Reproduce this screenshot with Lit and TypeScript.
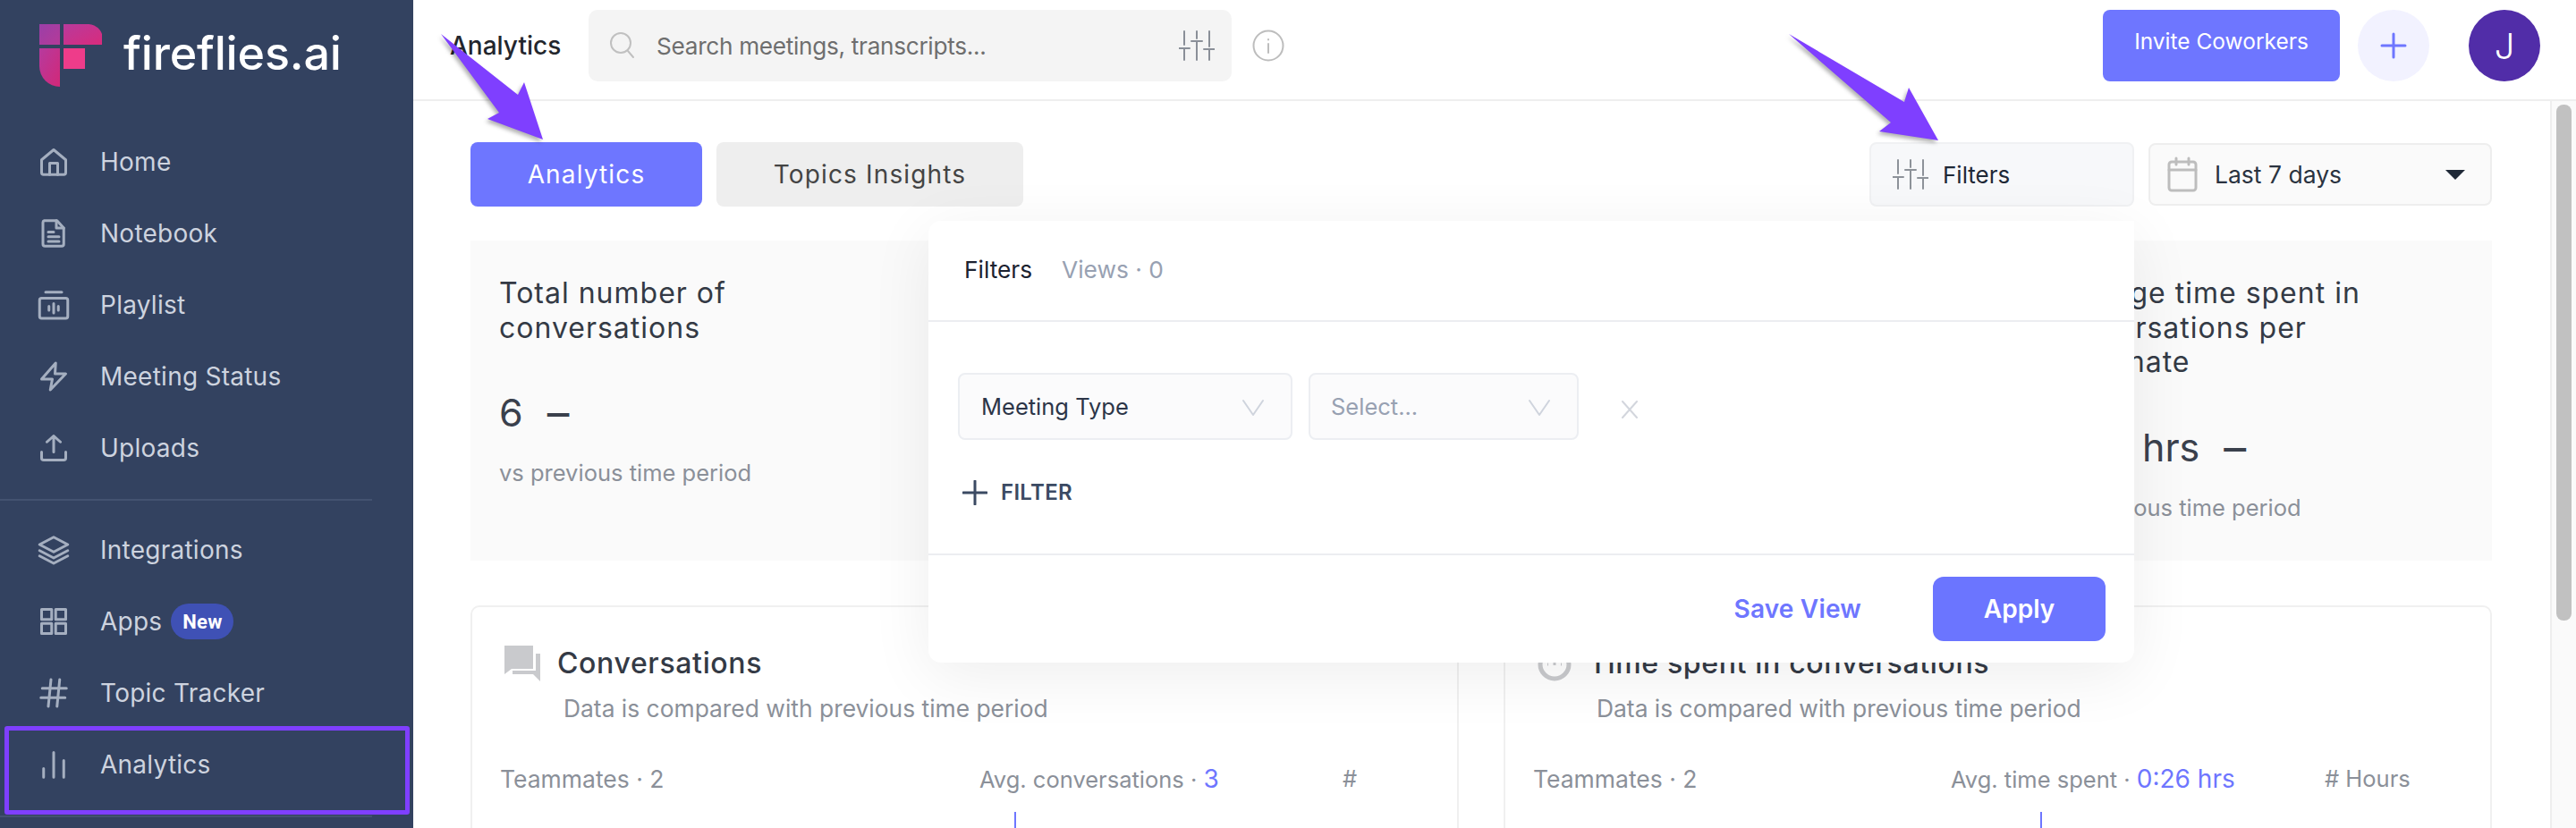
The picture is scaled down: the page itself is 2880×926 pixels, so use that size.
import { LitElement, html, css, svg } from "lit";
import { customElement } from "lit/decorators.js";

const ic = (w: number, h: number, vb: string, body: unknown, cls = "") =>
  html`<svg class=${cls} width=${w} height=${h} viewBox=${vb} fill="none" stroke="currentColor" stroke-width="2" stroke-linecap="round" stroke-linejoin="round">${body}</svg>`;

const sliders = (w: number, h: number) =>
  ic(w, h, "0 0 40 34", svg`<path d="M6 1v15M0 20h12M6 20v13M20 1v8M14 12h12M20 12v21M34 1v17M28 21h12M34 21v12"/>`);

const navTop = [
  ["Home", svg`<path d="M3 10.5 12 3l9 7.5V20a1.5 1.5 0 0 1-1.5 1.5h-15A1.5 1.5 0 0 1 3 20z"/><path d="M9 21.5V13h6v8.5"/>`],
  ["Notebook", svg`<path d="M5 2.500h9.500l5 5.500V20a1.500 1.500 0 0 1-1.500 1.500H5.500A1.500 1.500 0 0 1 4 20V4a1.500 1.500 0 0 1 1-1.500z"/><path d="M14 2.500V8h5.500M8 11h4M8 14.500h8M8 18h8"/>`],
  ["Playlist", svg`<path d="M6 2.500h12"/><rect x="1.500" y="7" width="21" height="15" rx="1.500"/><path d="M12 11v7M8.500 13v3M15.500 13v3"/>`],
  ["Meeting Status", svg`<path d="M13.500 2 3 14h8l-1.500 8L21 10h-8z"/>`],
  ["Uploads", svg`<path d="M3 15v4.500A1.500 1.500 0 0 0 4.500 21h15a1.500 1.500 0 0 0 1.500-1.500V15M12 15V3M7 7.500 12 3l5 4.500"/>`],
];
const navBottom = [
  ["Integrations", svg`<path d="M12 2.500 22.500 8 12 13.500 1.500 8z"/><path d="M1.500 12.500 12 18l10.500-5.500M1.500 16.500 12 22l10.500-5.500"/>`],
  ["Apps", svg`<rect x="3" y="3" width="7.500" height="7.500"/><rect x="13.500" y="3" width="7.500" height="7.500"/><rect x="3" y="13.500" width="7.500" height="7.500"/><rect x="13.500" y="13.500" width="7.500" height="7.500"/>`],
  ["Topic Tracker", svg`<path d="M3.500 8.500h18M2.500 15.500h18M10 2 8 22M16.500 2l-2 20"/>`],
  ["Analytics", svg`<path d="M4.500 15v6.500M12 3v18.500M19.500 9v12.500"/>`],
];

@customElement("app-root")
export class AppRoot extends LitElement {
  static styles = css`
    :host { display: block; width: 2880px; height: 926px; overflow: hidden; position: relative; background: #fff; font-family: Inter, sans-serif; color: #2f3542; }
    * { box-sizing: border-box; }
    .page { display: flex; height: 926px; }
    .side { width: 462px; flex: none; background: #334260; color: #cdd3df; position: relative; }
    .brand { display: flex; align-items: center; height: 124px; padding: 4px 0 0 44px; gap: 24px; margin-bottom: 17px; }
    .brand span { font-size: 52px; font-weight: 500; color: #fff; letter-spacing: -0.15px; line-height: 70px; margin-top: -9px; }
    .brand svg { margin-top: -4px; }
    .nav { display: flex; align-items: center; height: 80px; padding-left: 42px; gap: 34px; font-size: 28px; letter-spacing: 0.25px; }
    .nav svg { color: #a5afc0; flex: none; }
    .divider { height: 2px; background: #435270; width: 416px; margin: 17px 0 15px; }
    .divider.end { margin: 17px 0 0; }
    .badge { display: inline-flex; align-items: center; justify-content: center; width: 70px; height: 40px; border-radius: 20px; background: #3f51b5; color: #fff; font: 700 22px Roboto, sans-serif; margin-left: -24px; }
    .mark { position: absolute; left: 5px; top: 812px; width: 453px; height: 99px; border: 5px solid #7f3fff; border-radius: 3px; }
    .main { flex: 1; min-width: 0; display: flex; flex-direction: column; }
    .top { height: 113px; flex: none; border-bottom: 2px solid #eeeeee; display: flex; padding: 11px 40px 0 41px; }
    .top h1 { margin: 0; width: 155px; font-size: 28px; line-height: 80px; font-weight: 500; color: #23262d; }
    .search { width: 719px; height: 80px; border-radius: 10px; background: #f4f4f4; display: flex; align-items: center; padding: 0 19px 0 22px; color: #8a8f98; }
    .search .q { color: #c0c0c0; flex: none; }
    .search span { flex: 1; margin-left: 24px; font-size: 26.200px; color: #6e6e6e; letter-spacing: -0.3px; }
    .info { color: #bdbdbd; margin: 22px auto 0 23px; }
    .invite { width: 265px; height: 80px; border-radius: 8px; background: #6e76ff; color: #fff; font-size: 24.500px; display: flex; align-items: center; justify-content: center; padding-bottom: 10px; }
    .plus { width: 80px; height: 80px; border-radius: 50%; background: #f2f2ff; color: #6e76ff; margin-left: 20px; display: flex; align-items: center; justify-content: center; }
    .ava { width: 80px; height: 80px; border-radius: 50%; background: #512da8; color: #fff; margin-left: 44px; display: flex; align-items: center; justify-content: center; font-size: 40px; font-weight: 300; }
    .below { flex: 1; min-height: 0; display: flex; }
    .content { flex: 1; min-width: 0; padding: 46px 65px 0 64px; position: relative; overflow: hidden; }
    .sb { width: 29px; flex: none; background: #fafafa; border-left: 2px solid #eee; padding: 4px 5px 0 5px; }
    .sb div { height: 577px; background: #c1c1c1; border-radius: 8px; }
    .bar { display: flex; height: 72px; }
    .tab { display: flex; align-items: center; justify-content: center; height: 72px; border-radius: 8px; font-size: 28px; letter-spacing: 1.15px; }
    .tab.on { width: 259px; background: #6e76ff; color: #fff; }
    .tab.off { width: 343px; background: #eeeeee; color: #444; margin-left: 16px; margin-right: auto; }
    .fbtn { width: 296px; height: 72px; border-radius: 8px; background: #f7f8fa; border: 2px solid #f0f1f3; display: flex; align-items: center; padding-left: 24px; gap: 16px; font-size: 26px; color: #1f2937; }
    .fbtn svg { color: #8d9299; flex: none; }
    .date { width: 384px; height: 70px; margin: 1px 0 0 16px; border-radius: 8px; background: #fafafa; border: 2px solid #eeeeee; display: flex; align-items: center; padding-left: 19px; font-size: 26.500px; color: #2a3340; }
    .date svg { color: #bdbdbd; flex: none; }
    .date span { margin-left: 19px; flex: 1; }
    .caret { width: 0; height: 0; border-left: 11px solid transparent; border-right: 11px solid transparent; border-top: 11px solid #1f2937; margin-right: 28px; }
    .stats { display: grid; grid-template-columns: repeat(4, 1fr); gap: 50px; height: 358px; margin-top: 38px; }
    .stat { background: #fafafa; padding: 40px 32px 0; }
    .stat h3 { margin: 0; font-size: 32px; line-height: 38.500px; font-weight: 400; color: #343a45; letter-spacing: 1px; white-space: nowrap; }
    .num { margin-top: 45px; font-size: 43px; line-height: 60px; color: #3a404c; display: flex; gap: 24px; white-space: nowrap; }
    .dash { letter-spacing: -9px; font-weight: 500; }
    .sub { margin-top: 20px; font-size: 25.500px; line-height: 36px; color: #8b9099; white-space: nowrap; }
    .charts { display: grid; grid-template-columns: repeat(2, 1fr); gap: 50px; margin-top: 50px; }
    .chart { border: 2px solid #f0f0f0; border-radius: 10px; height: 400px; padding: 43px 0 0 36px; }
    .head { display: flex; align-items: center; gap: 19px; height: 40px; }
    .head svg { flex: none; }
    .head h2 { margin: 0; font-size: 32px; font-weight: 500; color: #343a45; line-height: 40px; letter-spacing: 0.65px; }
    .desc { margin: 12px 0 0 66px; font-size: 26.400px; line-height: 36px; color: #8b9099; }
    .row { display: grid; margin: 43px 0 0 -5px; font-size: 25.500px; line-height: 36px; color: #8b9099; white-space: nowrap; }
    .row > span:first-child { font-size: 26.500px; }
    .row.a { grid-template-columns: 536px 406px auto; }
    .row.b { grid-template-columns: 467px 418px auto; }
    .row b { font-weight: 400; font-size: 28px; color: #6e76ff; }
    .tick { width: 2px; height: 60px; background: #6e76ff; margin-top: 18px; }
    .tick.a { margin-left: 570px; }
    .tick.b { margin-left: 562px; }
    .pop { position: absolute; left: 576px; top: 134px; width: 1348px; height: 494px; background: #fff; border-radius: 14px 0 14px 14px; box-shadow: 0 14px 70px rgba(0, 0, 0, 0.07); display: flex; flex-direction: column; }
    .ptabs { height: 113px; flex: none; border-bottom: 2px solid #ecedf1; display: flex; gap: 33px; padding: 37px 0 0 40px; font-size: 26.300px; line-height: 36px; color: #1c2230; }
    .ptabs span + span { color: #98a1b2; }
    .pbody { flex: 1; border-bottom: 2px solid #ecedf1; padding: 57px 0 0 33px; }
    .sels { display: flex; align-items: center; gap: 18px; }
    .sel { height: 75px; border-radius: 8px; background: #fbfbfc; border: 2px solid #eceef2; display: flex; align-items: center; justify-content: space-between; padding: 0 30px 0 24px; font-size: 25.500px; color: #2c3548; }
    .sel.one { width: 374px; }
    .sel.two { width: 302px; padding-left: 23px; color: #98a1b2; }
    .sel svg { color: #cfd4dd; flex: none; }
    .x { color: #d3d6dd; margin: 6px 0 0 29px; }
    .add { display: flex; align-items: center; gap: 15px; margin: 43px 0 0 5px; font-size: 24px; font-weight: 600; color: #3b4a63; letter-spacing: 0.3px; line-height: 32px; }
    .pfoot { height: 120px; flex: none; display: flex; align-items: flex-start; justify-content: flex-end; padding: 24px 32px 0 0; }
    .save { font-size: 28px; font-weight: 600; color: #6e76ff; line-height: 72px; margin-right: 80px; letter-spacing: 0.2px; }
    .apply { width: 193px; height: 72px; border-radius: 12px; background: #6b75ff; color: #fff; font-size: 28px; font-weight: 600; display: flex; align-items: center; justify-content: center; }
    .arrows { position: absolute; left: 0; top: 0; pointer-events: none; filter: drop-shadow(-2px 3px 2px rgba(0, 0, 0, 0.3)); }
  `;

  render() {
    const item = ([label, path]: any) => html`<div class="nav">${ic(36, 36, "0 0 24 24", path)}<span>${label}</span>${label === "Apps" ? html`<span class="badge">New</span>` : ""}</div>`;
    return html`
      <div class="page">
        <aside class="side">
          <div class="brand">
            <svg width="70" height="70" viewBox="0 0 70 70">
              <defs>
                <linearGradient id="g1" x1="0" y1="0" x2="1" y2="1"><stop offset="0" stop-color="#9a3fa8"/><stop offset="1" stop-color="#b53a98"/></linearGradient>
                <linearGradient id="g2" x1="0" y1="0" x2="1" y2="1"><stop offset="0" stop-color="#b83a9c"/><stop offset="1" stop-color="#d92b7c"/></linearGradient>
                <linearGradient id="g3" x1="0" y1="0" x2="1" y2="1"><stop offset="0" stop-color="#b63a9e"/><stop offset="1" stop-color="#d22878"/></linearGradient>
              </defs>
              <rect width="23" height="23" fill="url(#g1)"/>
              <path d="M27 0h26a17 17 0 0 1 17 23H27z" fill="url(#g2)"/>
              <path d="M0 27h23v43A23 23 0 0 1 0 47z" fill="url(#g3)"/>
              <rect x="27" y="27" width="24" height="23" fill="#ee3c8a"/>
            </svg>
            <span>fireflies.ai</span>
          </div>
          ${navTop.map(item)}
          <div class="divider"></div>
          ${navBottom.map(item)}
          <div class="divider end"></div>
          <div class="mark"></div>
        </aside>
        <div class="main">
          <header class="top">
            <h1>Analytics</h1>
            <div class="search">
              ${ic(30, 36, "0 0 30 36", svg`<circle cx="14" cy="15" r="11"/><path d="m22 24 6 7"/>`, "q")}
              <span>Search meetings, transcripts...</span>
              ${sliders(40, 34)}
            </div>
            ${ic(36, 36, "0 0 36 36", svg`<circle cx="18" cy="18" r="16.500"/><path d="M18 16v10M18 11v.5"/>`, "info")}
            <div class="invite">Invite Coworkers</div>
            <div class="plus">${ic(30, 30, "0 0 30 30", svg`<path d="M15 2v26M2 15h26" stroke-width="3"/>`)}</div>
            <div class="ava">J</div>
          </header>
          <div class="below">
            <div class="content">
              <div class="bar">
                <div class="tab on">Analytics</div>
                <div class="tab off">Topics Insights</div>
                <div class="fbtn">${sliders(40, 34)}<span>Filters</span></div>
                <div class="date">
                  ${ic(34, 40, "0 0 34 40", svg`<rect x="2" y="6" width="30" height="32" rx="3" stroke-width="3"/><path d="M2 15h30M10 2v7M24 2v7" stroke-width="3"/>`)}
                  <span>Last 7 days</span><i class="caret"></i>
                </div>
              </div>
              <div class="stats">
                <div class="stat">
                  <h3>Total number of<br />conversations</h3>
                  <div class="num"><span>6</span><span class="dash">--</span></div>
                  <div class="sub">vs previous time period</div>
                </div>
                <div></div>
                <div></div>
                <div class="stat">
                  <h3>Average time spent in<br />conversations per<br />teammate</h3>
                  <div class="num"><span>0:26 hrs</span><span class="dash">--</span></div>
                  <div class="sub">vs previous time period</div>
                </div>
              </div>
              <div class="charts">
                <section class="chart">
                  <div class="head">
                    <svg width="40" height="40" viewBox="0 0 40 40" fill="#c9cacd"><path d="M0 0h32v26H8l-8 6z"/><path d="M35 9h5v31l-8-8H9v-4h26z"/></svg>
                    <h2>Conversations</h2>
                  </div>
                  <p class="desc">Data is compared with previous time period</p>
                  <div class="row a"><span>Teammates · 2</span><span>Avg. conversations · <b>3</b></span><span>#</span></div>
                  <div class="tick a"></div>
                </section>
                <section class="chart">
                  <div class="head">
                    <svg width="38" height="40" viewBox="0 0 38 40" fill="none" stroke="#c9cacd"><circle cx="19" cy="21" r="16" stroke-width="5"/><path d="M19 12v10M11 21h1M26 21h1" stroke-width="3"/></svg>
                    <h2>Time spent in conversations</h2>
                  </div>
                  <p class="desc">Data is compared with previous time period</p>
                  <div class="row b"><span>Teammates · 2</span><span>Avg. time spent · <b>0:26 hrs</b></span><span># Hours</span></div>
                  <div class="tick b"></div>
                </section>
              </div>
              <div class="pop">
                <div class="ptabs"><span>Filters</span><span>Views · 0</span></div>
                <div class="pbody">
                  <div class="sels">
                    <div class="sel one">Meeting Type${ic(24, 24, "0 0 24 24", svg`<path d="m1 5 11 16L23 5"/>`)}</div>
                    <div class="sel two">Select...${ic(24, 24, "0 0 24 24", svg`<path d="m1 5 11 16L23 5"/>`)}</div>
                    ${ic(20, 20, "0 0 20 20", svg`<path d="m2 1 16 18M18 1 2 19"/>`, "x")}
                  </div>
                  <div class="add">${ic(28, 28, "0 0 28 28", svg`<path d="M14 1v26M1 14h26" stroke-width="3"/>`)}<span>FILTER</span></div>
                </div>
                <div class="pfoot"><span class="save">Save View</span><div class="apply">Apply</div></div>
              </div>
            </div>
            <div class="sb"><div></div></div>
          </div>
        </div>
      </div>
      <svg class="arrows" width="2880" height="926" viewBox="0 0 2880 926" fill="#7f3fff">
        <path d="M493 38 579 106 586 92 607 156 545 133 558 126Z" />
        <path d="M2000 38 2129 114 2134 98 2167 157 2101 147 2114 137Z" />
      </svg>
    `;
  }
}
